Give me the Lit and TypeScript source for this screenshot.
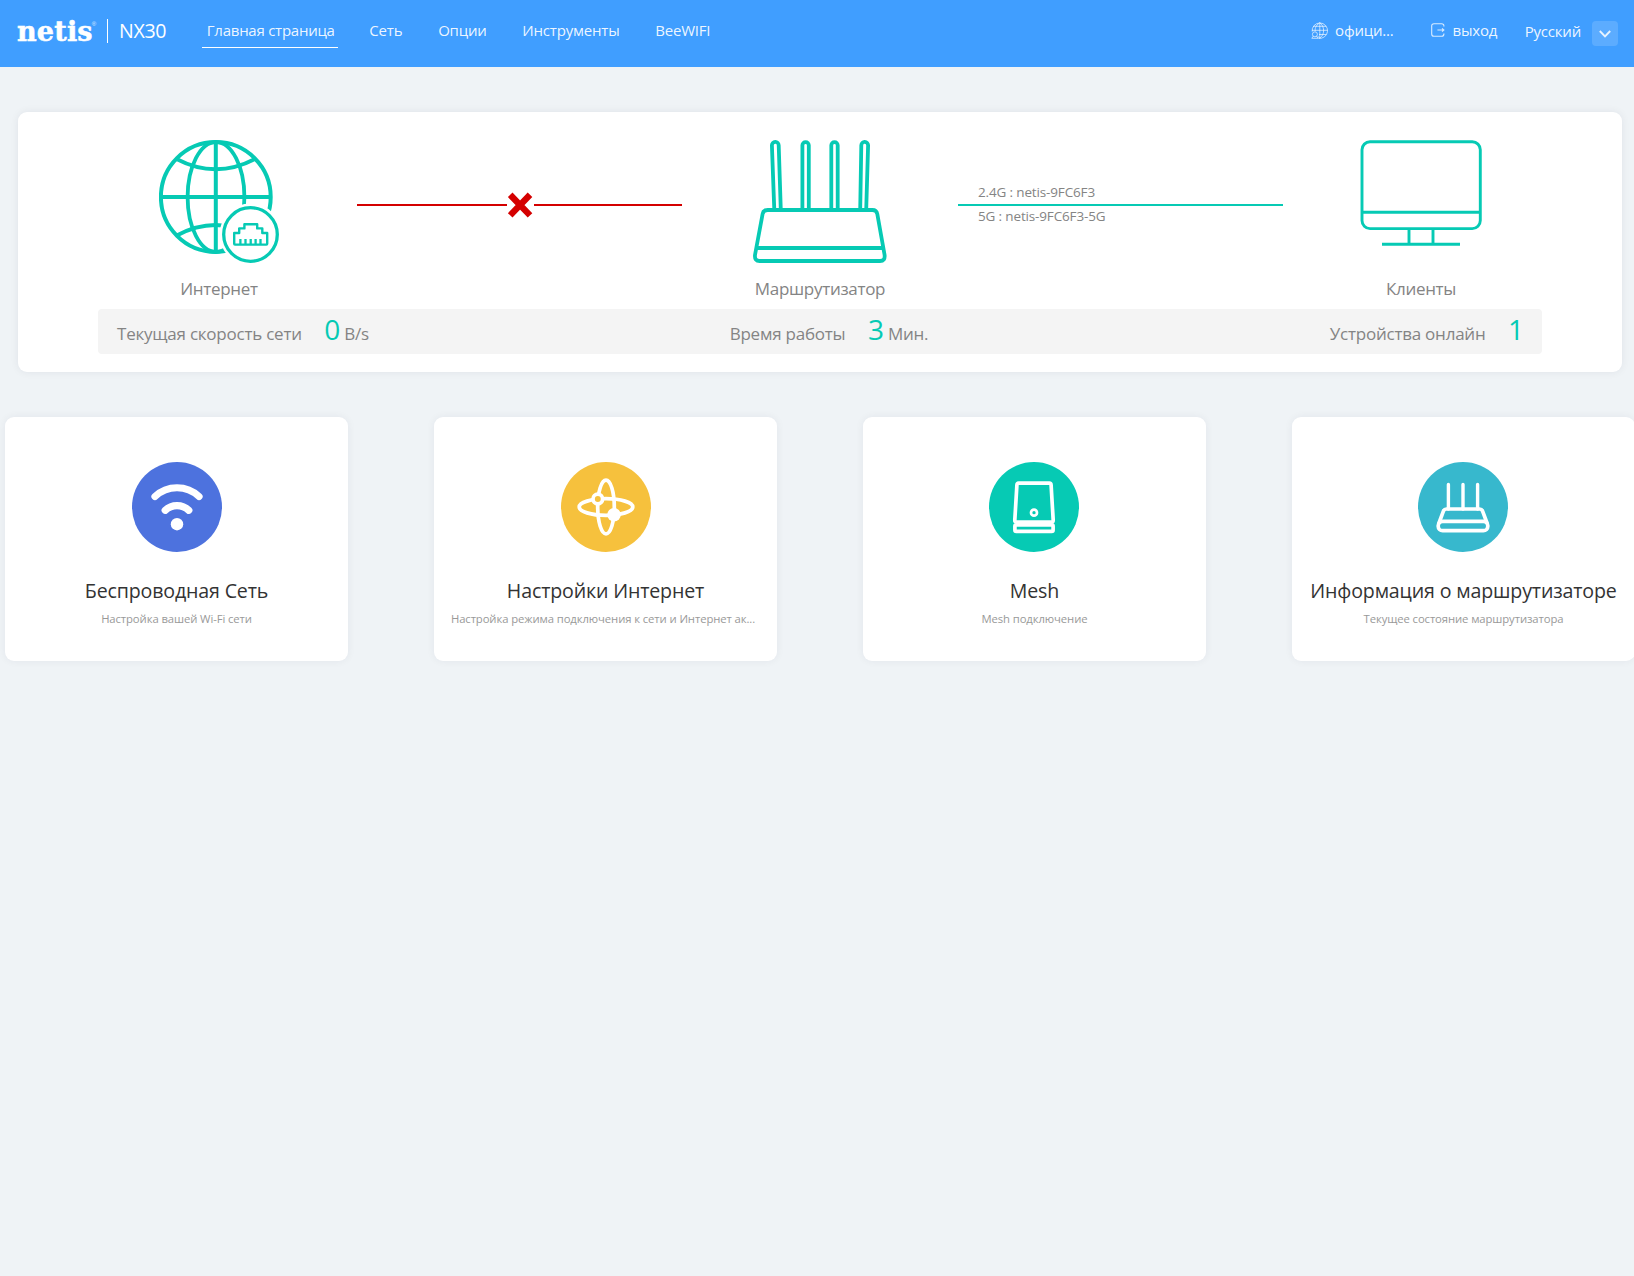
import { LitElement, html, css } from "lit";
import { customElement } from "lit/decorators.js";

const NAV = ["Главная страница", "Сеть", "Опции", "Инструменты", "BeeWIFI"];

const globeIcon = html`<svg class="node-icon" width="121" height="123" viewBox="0 0 121 123" fill="none" stroke="#06cab4" stroke-width="4">
  <circle cx="56.8" cy="57" r="54.9"/>
  <ellipse cx="57" cy="57" rx="28.4" ry="54.9" stroke-width="3.8"/>
  <path d="M17.5 19Q56.7 39.5 96 19M17.7 95.5Q56.7 74.5 95.5 95.5" stroke-width="3.8"/>
  <path d="M56.8 2V112M2 57H111.5"/>
  <circle cx="91.5" cy="94.5" r="31" fill="#fff" stroke="none"/>
  <circle cx="91.5" cy="94.5" r="26.8" stroke-width="3.3"/>
  <path d="M76 104.6Q75.2 104.6 75.2 103.8V93H80.2V88.4H85.4V84.2H98.2V88.4H103.3V93H108.2V103.8Q108.2 104.6 107.4 104.6Z" stroke-width="2.4" stroke-linejoin="round"/>
  <path d="M81.4 99V104M86.5 99V104M91.7 99V104M96.6 99V104M101.5 99V104" stroke-width="2.3"/>
</svg>`;

const routerIcon = html`<svg class="node-icon" width="134" height="123" viewBox="0 0 134 123" fill="none" stroke="#06cab4" stroke-width="3.8" stroke-linejoin="round">
  <path d="M21.3 70L18.9 5.4A3.4 3.4 0 0 1 25.7 5.2L27.8 70M49.4 70V5.3A3.2 3.2 0 0 1 55.8 5.3V70M78.3 70V5.3A3.2 3.2 0 0 1 84.7 5.3V70M107.2 70L108.3 5.2A3.4 3.4 0 0 1 115.1 5.4L113.2 70"/>
  <path d="M14.8 70H119.4Q123.6 70 124.3 74L131.6 115Q132.3 121 127 121H6.6Q1.4 121 2 115L9.6 74Q10.3 70 14.8 70Z"/>
  <path d="M4 108H129.6"/>
</svg>`;

const monitorIcon = html`<svg class="node-icon" width="122" height="123" viewBox="0 0 122 123" fill="none" stroke="#06cab4" stroke-width="2.9">
  <rect x="2" y="1.8" width="118.3" height="86.8" rx="8"/>
  <path d="M2 72.2H120M49 88.6V104M73 88.6V104"/>
  <path d="M22 104.3H100"/>
</svg>`;

const wifiIcon = html`<svg class="disc" width="90" height="90" viewBox="0 0 90 90" fill="none" stroke="#fff" stroke-width="7.2" stroke-linecap="round">
  <circle cx="45" cy="45" r="45" fill="#4d72de" stroke="none"/>
  <path d="M23 34.5A32 32 0 0 1 67 34.5M33.2 48.3A17 17 0 0 1 56.8 48.3"/>
  <circle cx="45" cy="62.2" r="6.2" fill="#fff" stroke="none"/>
</svg>`;

const orbitIcon = html`<svg class="disc" width="90" height="90" viewBox="0 0 90 90" fill="none" stroke="#fff" stroke-width="3.7">
  <circle cx="45" cy="45" r="45" fill="#f6c13d" stroke="none"/>
  <ellipse cx="45" cy="45" rx="8.3" ry="26.8"/>
  <ellipse cx="45" cy="45" rx="26.8" ry="8.3"/>
  <circle cx="36.8" cy="37" r="4.8" fill="#f6c13d"/>
  <circle cx="53" cy="52.8" r="6.8" fill="#fff" stroke="none"/>
</svg>`;

const meshIcon = html`<svg class="disc" width="90" height="90" viewBox="0 0 90 90" fill="none" stroke="#fff" stroke-width="3.7" stroke-linejoin="round">
  <circle cx="45" cy="45" r="45" fill="#06cab4" stroke="none"/>
  <path d="M29.6 21.2H60.4Q62 21.2 62.1 23L64.2 58.2Q64.2 60 62.6 60H27.3Q25.7 60 25.8 58.2L27.9 23Q28 21.2 29.6 21.2Z"/>
  <rect x="25.9" y="62.8" width="38.2" height="6.5" rx="1.4"/>
  <path d="M28 61.4H62"/>
  <circle cx="45" cy="50.7" r="3" stroke-width="2.7"/>
</svg>`;

const infoIcon = html`<svg class="disc" width="90" height="90" viewBox="0 0 90 90" fill="none" stroke="#fff" stroke-width="3.7" stroke-linejoin="round">
  <circle cx="45" cy="45" r="45" fill="#37b8cd" stroke="none"/>
  <path d="M30.4 47V22.4M45 47V22.4M59.6 47V22.4" stroke-linecap="round" stroke-width="3.4"/>
  <path d="M20.8 61.5L25.3 49.3Q26.2 47 28.4 47H61.6Q63.8 47 64.7 49.3L69.2 61.5"/>
  <rect x="20.2" y="59.3" width="49.6" height="9.4" rx="4.4"/>
</svg>`;

const CARDS = [
  { icon: wifiIcon, title: "Беспроводная Сеть", note: "Настройка вашей Wi-Fi сети" },
  { icon: orbitIcon, title: "Настройки Интернет", note: "Настройка режима подключения к сети и Интернет ак..." },
  { icon: meshIcon, title: "Mesh", note: "Mesh подключение" },
  { icon: infoIcon, title: "Информация о маршрутизаторе", note: "Текущее состояние маршрутизатора" },
];

@customElement("app-root")
export class AppRoot extends LitElement {
  static styles = css`
    :host { display: block; min-height: 1276px; background: #eff3f6; overflow: hidden; white-space: nowrap; font-family: "Open Sans", "Noto Sans", sans-serif; color: #848484; }
    svg { display: block; flex: none; }

    .header { display: flex; align-items: flex-start; box-sizing: border-box; height: 67px; padding: 0 16px 0 17px; background: #409eff; color: rgba(255, 255, 255, .92); font-size: 15px; letter-spacing: -.2px; }
    .brand { display: flex; width: 90px; color: #fff; }
    .logo { font: bold 27px/64px "DejaVu Serif", serif; letter-spacing: .2px; -webkit-text-stroke: .5px #fff; }
    .reg { font: 6px/10px "Liberation Sans", sans-serif; letter-spacing: 0; margin: 19px 0 0 -1px; opacity: .8; }
    .model { margin: 19px 0 0; padding-left: 11px; border-left: 1px solid #fff; height: 24px; line-height: 23px; font-size: 19.6px; letter-spacing: -.3px; color: #fff; width: 83px; }
    .nav { display: flex; gap: 27.6px; margin-top: 13px; }
    .nav-item { line-height: 35px; height: 34px; padding: 0 4.1px; border-bottom: 1px solid transparent; }
    .nav-item.active { border-bottom-color: #fff; padding: 0 3px 0 4.8px; letter-spacing: -.25px; }
    .tools { display: flex; margin-left: auto; line-height: 61px; }
    .globe { margin: 22px 7px 0 0; }
    .exit { margin: 23px 8px 0 37px; }
    .lang { margin: 1px 11px 0 27.5px; }
    .drop { display: flex; align-items: center; justify-content: center; width: 26px; height: 25px; margin-top: 21px; border-radius: 4px; background: rgba(255, 255, 255, .15); }

    .panel { box-sizing: border-box; margin: 45px 12px 0 18px; height: 260px; padding-top: 28px; border-radius: 9px; background: #fff; box-shadow: 0 0 8px rgba(0, 21, 60, .07); }
    .topology { display: grid; grid-template-columns: 276px 325px 276px 325px 276px; margin-left: 62.5px; height: 169px; }
    .node { display: flex; flex-direction: column; align-items: center; }
    .node-label { margin-top: 12px; font-size: 17px; line-height: 27px; letter-spacing: -.3px; padding-left: 1px; }
    .net .node-icon { margin-left: 1px; }
    .down { display: flex; align-items: center; justify-content: space-between; height: 26px; margin-top: 52px; }
    .wire { height: 2px; background: #d40000; }
    .wire.left { width: 150px; }
    .wire.right { width: 148px; }
    .up { padding-top: 40px; font-size: 13.5px; letter-spacing: -.15px; }
    .ssid { padding-left: 20.5px; line-height: 24px; height: 24px; }
    .ssid.low { line-height: 20px; border-top: 2px solid #06cab4; }

    .stats { display: grid; grid-template-columns: 1fr 1fr 1fr; box-sizing: border-box; width: 1444px; height: 45px; margin-left: 80px; padding: 0 19px 0 19px; border-radius: 4px; background: #f4f4f4; font-size: 17px; line-height: 50px; letter-spacing: -.23px; overflow: hidden; }
    .stat { display: flex; align-items: baseline; }
    .stat.mid { justify-content: center; padding-left: 18px; }
    .stat.end { justify-content: flex-end; }
    .value { margin: 0 5px 0 22.5px; font-size: 28px; line-height: 40px; letter-spacing: -1px; color: #06cab4; }
    .stat.end .value { margin-right: 0; }

    .cards { display: flex; gap: 86px; margin: 45px 0 0 5px; }
    .card { display: flex; flex-direction: column; align-items: center; flex: 0 0 343px; box-sizing: border-box; height: 244px; padding-top: 45px; border-radius: 9px; background: #fff; box-shadow: 0 0 8px rgba(0, 21, 60, .06); }
    .card:nth-child(n + 3) .disc { margin-right: 1px; }
    .card-title { margin-top: 22px; font-size: 19.6px; line-height: 33px; letter-spacing: -.15px; color: #333; }
    .card-note { margin-top: 2px; font-size: 11.3px; line-height: 20px; letter-spacing: -.1px; color: #999; }
    .card:nth-child(2) .card-note { padding-right: 5px; }
  `;

  render() {
    return html`
      <div class="header">
        <div class="brand"><span class="logo">netis</span><span class="reg">®</span></div>
        <div class="model">NX30</div>
        <div class="nav">${NAV.map((n, i) => html`<div class="nav-item ${i === 0 ? "active" : ""}">${n}</div>`)}</div>
        <div class="tools">
          <svg class="globe" width="17" height="17" viewBox="0 0 17 17" fill="none" stroke="#fff" stroke-opacity=".72" stroke-width=".9">
            <path d="M1.2 9.6A7.7 7.7 0 1 1 7.2 16.2M8.8 .7V16.3M1 8.3H16.6M2.3 4.3H15.3M8 12.5H15.3"/>
            <path d="M8.8 .7C3.9 4 4 7.5 4.3 9.2M8.8 .7C13.9 4.5 13.9 12.5 8.8 16.3C8 15.8 7.4 15 7 14.3"/>
            <circle cx="3.9" cy="12.3" r="2.5"/><path d="M2.2 14.2L.8 16.3H7L5.6 14.2"/>
          </svg>
          <span>офици...</span>
          <svg class="exit" width="14" height="14" viewBox="0 0 14 14" fill="none" stroke="#fff" stroke-opacity=".8" stroke-width="1.1">
            <path d="M12.9 3.6V3Q12.9 .7 10.6 .7H3Q.7 .7 .7 3V11Q.7 13.3 3 13.3H10.6Q12.9 13.3 12.9 11V10.4M6.4 7H12.8M11 5.3L12.9 7L11 8.7"/>
          </svg>
          <span>выход</span>
          <span class="lang">Русский</span>
          <div class="drop"><svg width="12" height="8" viewBox="0 0 12 8" fill="none" stroke="#fff" stroke-opacity=".85" stroke-width="1.9"><path d="M.8 1L6 6.3L11.2 1"/></svg></div>
        </div>
      </div>

      <div class="panel">
        <div class="topology">
          <div class="node net">${globeIcon}<div class="node-label">Интернет</div></div>
          <div class="down">
            <div class="wire left"></div>
            <svg width="26" height="26" viewBox="0 0 26 26" fill="none" stroke="#d40000" stroke-width="6.4"><path d="M3.2 2.8L23 23.4M23 2.8L3.2 23.4"/></svg>
            <div class="wire right"></div>
          </div>
          <div class="node">${routerIcon}<div class="node-label">Маршрутизатор</div></div>
          <div class="up"><div class="ssid">2.4G : netis-9FC6F3</div><div class="ssid low">5G : netis-9FC6F3-5G</div></div>
          <div class="node">${monitorIcon}<div class="node-label">Клиенты</div></div>
        </div>
        <div class="stats">
          <div class="stat"><span>Текущая скорость сети</span><span class="value">0</span><span>B/s</span></div>
          <div class="stat mid"><span>Время работы</span><span class="value">3</span><span>Мин.</span></div>
          <div class="stat end"><span>Устройства онлайн</span><span class="value">1</span></div>
        </div>
      </div>

      <div class="cards">
        ${CARDS.map((c) => html`<div class="card">${c.icon}<div class="card-title">${c.title}</div><div class="card-note">${c.note}</div></div>`)}
      </div>
    `;
  }
}
